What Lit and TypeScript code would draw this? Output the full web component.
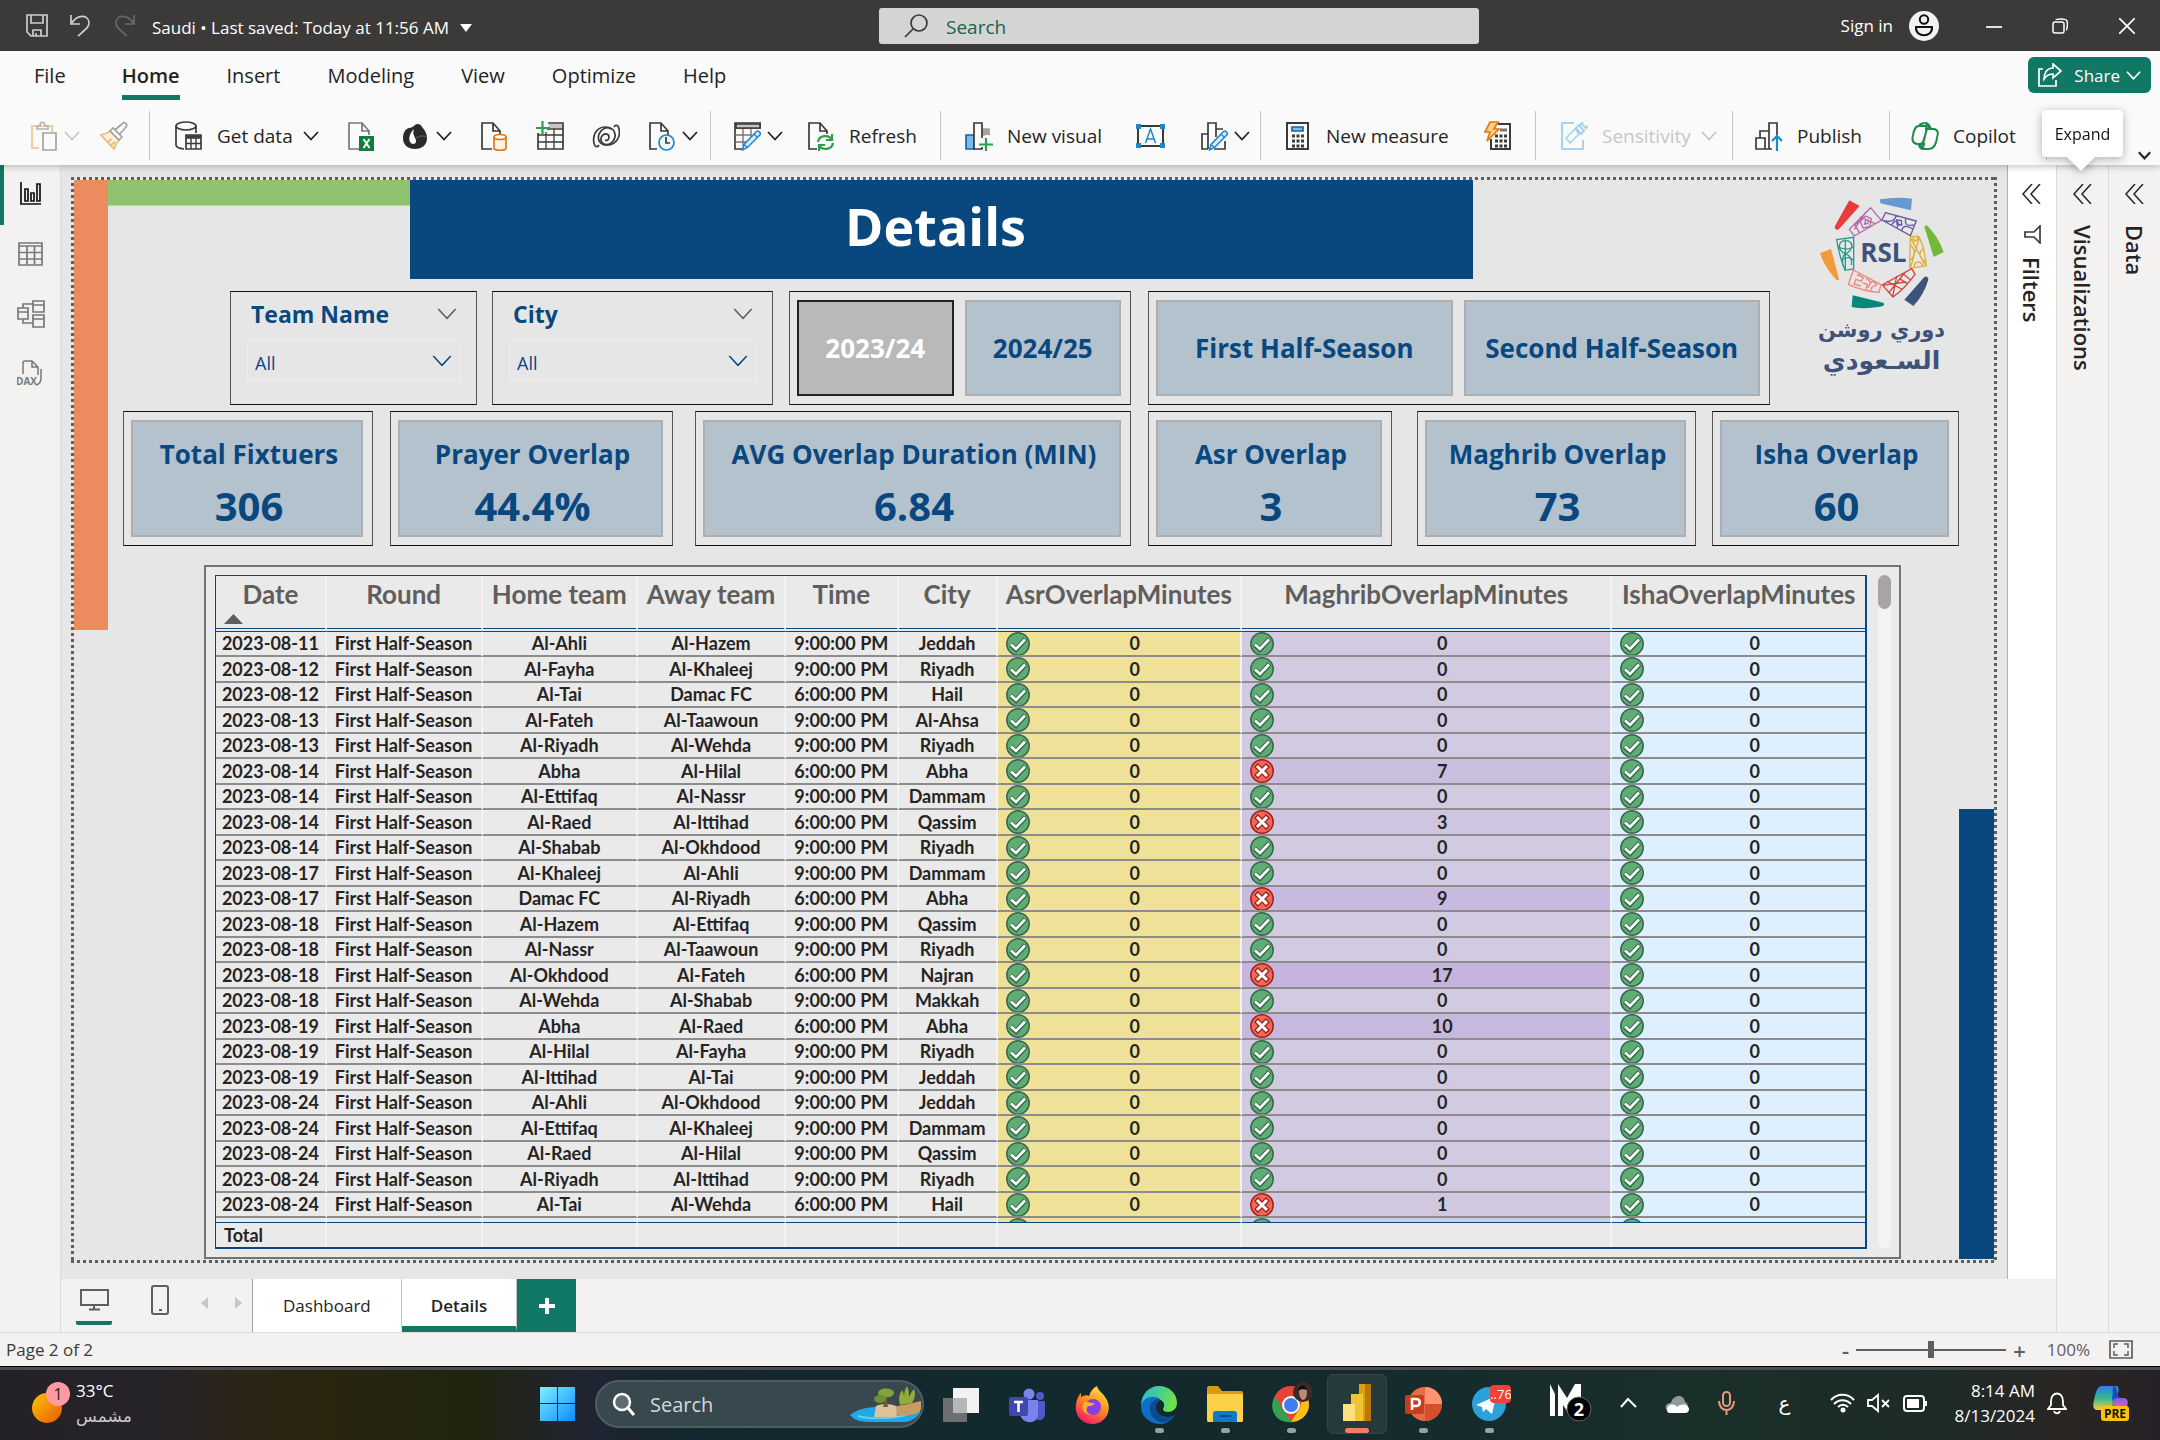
import { LitElement, html, svg, css } from 'lit';
import { customElement } from 'lit/decorators.js';
import { classMap } from 'lit/directives/class-map.js';

const base = css`
  :host { display: block; font-family: "Open Sans", "Noto Sans", sans-serif; color: #252423; }
  * { box-sizing: border-box; }
  button, select, input { font: inherit; color: inherit; }
  button { background: none; border: 0; padding: 0; margin: 0; display: flex; align-items: center; white-space: nowrap; }
  svg { display: block; flex: none; fill: none; }
`;

const chevron = (size = 16, color = '#252423', width = 1.8) => html`
  <svg width=${size} height=${size} viewBox="0 0 16 16" stroke=${color} stroke-width=${width} aria-hidden="true"><path d="M1 4l7 7.5L15 4" /></svg>`;

const icon = (body: unknown, w = 28, h = 30, vb = `0 0 ${w} ${h}`) => html`
  <svg width=${w} height=${h} viewBox=${vb} stroke="#3b3a39" stroke-width="1.7" aria-hidden="true">${body}</svg>`;

const pencil = svg`<path d="M24 9l4 4-13 14-6 3 2-7z" fill="#fafafa" stroke="none"/><path d="M23.500 10.500c1.500-1.500 5 1.500 3.500 3.300L14.500 26.500l-5 2.500 1.500-5.500z" fill="#d7ecfb" stroke="#1e87d0" stroke-width="1.500"/><path d="M21 13l3.500 3.500M11 23.500l3.500 3" stroke="#1e87d0" stroke-width="1.300"/>`;
const docPath = svg`<path d="M12 28H2V2h11l7 8v4M13 2v8h7" />`;

const ICONS = {
  paste: svg`<path d="M9 27H2V5h20v6" stroke="#f3cf9f" stroke-width="2.200"/><path d="M7 8V5h3c0-5 5-5 5 0h3v3z" stroke="#b5b3b1"/><path d="M13 12h13v17H13z" stroke="#a5a3a1" fill="#fafafa"/>`,
  brush: svg`<path d="M1 14c4-1 7-2 9-4l9 9c-2 2-4 5-5 9z" fill="#fdf0dc" stroke="#f0b878"/><path d="M7 21l5-3M10 25l5-4" stroke="#f0b878"/><path d="M10 10l3-3 9 9-3 3zM15 9l8-7c2-1 5 1 3 4l-7 8" stroke="#a5a3a1" fill="#fafafa"/>`,
  database: svg`<path d="M1 5v19c0 2 4 3.500 8 4M21 5v7"/><ellipse cx="11" cy="5" rx="10" ry="4"/><path d="M11 14h15v14H11z" fill="#fafafa"/><path d="M11 17h15M11 22.500h15M16 17v11M21 17v11" stroke-width="1.400"/><path d="M11 15.500h15" stroke-width="2.500"/>`,
  excel: svg`<path d="M12 28H2V2h13l7 8v4M15 2v8h7" stroke="#797775"/><path d="M12 15h15v15H12z" fill="#107c41" stroke="none"/><path d="M16.500 18l6 9M22.500 18l-6 9" stroke="#fff" stroke-width="2"/>`,
  lake: svg`<path d="M13 4c2-2 6-1 7 2 3 3 5 7 5 11 0 7-5 11-12 11S1 24 1 17c0-5 2-9 6-10 2 0 4-1 6-3z" fill="#2b2a29" stroke="none"/><path d="M12 8c-5 4-7 14-1 15 3 0 4-3 2-6-2-4-2-6-1-9z" fill="#fff" stroke="none"/><path d="M14 17c4-3 8-2 11-1" stroke="#6b6967" stroke-width="1"/>`,
  docCylinder: svg`<path d="M12 28H2V2h11l7 8v3M13 2v8h7"/><path d="M14 16v11c0 3 12 3 12 0V16" fill="#fdf3e6" stroke="#d97b16"/><ellipse cx="20" cy="16" rx="6" ry="2.500" fill="#fff" stroke="#d97b16"/>`,
  tablePlus: svg`<path d="M2 12v16h25V2H12"/><path d="M13 3h13v4H13z" fill="#c8c6c4" stroke="none"/><path d="M11 8h16M2 14h25M2 21h25M10 11v17M18 8v20" stroke-width="1.300"/><path d="M6.500 0v14M0 7h14" stroke="#2ba04a" stroke-width="2.200"/>`,
  spiral: svg`<path d="M3 25C-1 16 4 6 13 6c7 0 11 4 10 10-1 5-6 9-11 7-4-2-4-7-1-9 2-2 6-1 6 2s-2 4-4 3"/><path d="M26 5c4 9-1 19-11 19-7 0-10-5-8-11 2-5 8-8 12-5"/><path d="M3 25c1 1 3 1 4-1M26 5c-1-1-3-1-4 1"/>`,
  docClock: svg`<path d="M9 28H2V2h11l7 8v4M13 2v8h7"/><circle cx="18.500" cy="21.500" r="7.500" fill="#eef7fd" stroke="#1e87d0"/><path d="M18 16v6h4"/>`,
  tableEdit: svg`<path d="M10 28H2V2h26v5H2"/><path d="M3 3h24v4H3z" fill="#c8c6c4"/><path d="M2 14h17M2 21h11M10 8v17M18 8v8" stroke="#797775" stroke-width="1.400"/>${pencil}`,
  refresh: svg`${docPath}<path d="M10 13h17v17H10z" fill="#fafafa" stroke="none"/><g stroke="#2f9e4c" stroke-width="2.200"><path d="M11 21c1-7 11-8 14-2M25 13v6h-6M26 22c-1 7-11 8-14 2M12 30v-6h6"/></g>`,
  visual: svg`<path d="M1 14h8v14H1z" fill="#7db8e8" stroke="#1066b0"/><path d="M18 8h6v6h-6z" fill="#a5a3a1" stroke="#a5a3a1"/><path d="M9 2h8v26H9z" fill="#fafafa"/><path d="M15 17h5v-3h4v12h-9z" fill="#fafafa" stroke="none"/><path d="M21 17v13M14 23.500h14" stroke="#2ba04a" stroke-width="2.200"/>`,
  textBox: svg`<path d="M3 5h25v20H3z" stroke-width="2"/><g fill="#1e87d0" stroke="none"><path d="M1 3h5v5H1zM25 3h5v5h-5zM1 22h5v5H1zM25 22h5v5h-5z"/></g><path d="M10.500 22l5-14 5 14M12 18h7" stroke="#1e87d0" stroke-width="1.500"/>`,
  chartEdit: svg`<path d="M8 28H2V13h6M8 28V2h8v14M16 8h7M14 28h11v-8"/>${pencil}`,
  calc: svg`<path d="M3 2h21v26H3z" stroke-width="2"/><path d="M8 6h11v4H8z" fill="#7db8e8" stroke="#1066b0"/><path d="M8 15h12M8 20h12M8 25h12" stroke-width="3" stroke-dasharray="3 1.500"/>`,
  calcBolt: svg`<path d="M14 3h12v25H7V18" stroke-width="2"/><path d="M16 9h7" stroke="#797775" stroke-width="3"/><path d="M11 15h13M11 20h13M11 25h13" stroke-width="3" stroke-dasharray="3 1.500"/><path d="M6 1h8l-4 7h5L3 20l3-9H1z" fill="#fcd08a" stroke="#e07b10"/>`,
  sensitivity: svg`<g stroke="#a9d3ec"><path d="M14 2H2v26h21v-9" stroke-width="2"/><path d="M6 17l9-9 4 5-9 9z"/><path d="M16 7l3-3 5 6-3 3zM20 4l3-3M25 8l3-3M21 2l5 5" stroke-width="2"/></g>`,
  publish: svg`<path d="M1 17h9v11H1zM10 28h7M5 17v-7h9v18M14 10V2h8v12"/><path d="M22 30V15M17 20l5-5 5 5" stroke="#1e87d0" stroke-width="2.200"/>`,
  copilot: svg`<g stroke="#1f8a4a" stroke-width="2"><path d="M8 5c1-3 8-4 10-1l2 4h3c5 1 4 5 3 9-1 7-3 11-8 11h-6c-3 0-4-3-4-5H6c-5-1-5-5-4-9 1-5 2-9 6-9z" fill="#fafafa"/><path d="M8 23c3 0 4-1 5-5l3-10h4M8 5h6c3 0 2 3 1 6l-3 12" /><path d="M16 3l3 5h-4zM8 23h5l-1 4z" fill="#8fd3a8"/></g>`,
};

@customElement('title-bar')
class TitleBar extends LitElement {
  static styles = [base, css`
    .bar { display: grid; grid-template-columns: minmax(0, 879fr) minmax(0, 600fr) minmax(0, 681fr); height: 51px; align-items: center; background: #3b3a39; color: #fff; font-size: 17px; }
    .left { display: flex; align-items: center; padding-left: 26px; gap: 22px; }
    .file { gap: 11px; margin-left: -6px; padding-top: 4px; }
    .search { height: 36px; background: #d4d4d2; border-radius: 3px; display: flex; align-items: center; gap: 18px; padding-left: 25px; }
    .search input { border: 0; background: none; outline: 0; padding: 2px 0 0; font-size: 19px; flex: 1; min-width: 0; }
    .search input::placeholder { color: #22604f; opacity: 1; }
    .right { display: flex; align-items: center; justify-content: flex-end; gap: 50px; padding-right: 25px; }
    .sign { gap: 16px; }
    .sign svg { margin-right: -3px; }
  `];
  render() {
    return html`<header class="bar">
      <div class="left">
        <button aria-label="Save">${icon(svg`<g stroke="#d0cecc"><path d="M1 1h20v21H5l-4-4z"/><path d="M5 1v8h12V1M7 22v-6h8v6M10 22v-3"/></g>`, 22, 23)}</button>
        <button aria-label="Undo">${icon(svg`<path d="M1 1v9h9M1 10C8-1 19 1 19 9c0 4-3 6-11 13" stroke="#d0cecc"/>`, 22, 23)}</button>
        <button aria-label="Redo">${icon(svg`<path d="M20 1v9h-9M20 10C13-1 2 1 2 9c0 4 3 6 11 13" stroke="#6b6967"/>`, 22, 23)}</button>
        <button class="file">Saudi • Last saved: Today at 11:56 AM <svg width="12" height="8" viewBox="0 0 12 8"><path d="M0 0h12L6 8z" fill="#fff"/></svg></button>
      </div>
      <label class="search">${icon(svg`<circle cx="15" cy="9" r="8"/><path d="M9 15l-8 8"/>`, 24, 24)}<input type="search" placeholder="Search" aria-label="Search" /></label>
      <div class="right">
        <button class="sign">Sign in ${icon(svg`<circle cx="15" cy="15" r="15" fill="#f3f2f1" stroke="none"/><g stroke="#111" stroke-width="2"><circle cx="15" cy="8.500" r="4.200"/><path d="M7 16h16c1 11-17 11-16 0z"/></g>`, 30, 30)}</button>
        <button aria-label="Minimize">${icon(svg`<path d="M0 9h16" stroke="#fff"/>`, 16, 16)}</button>
        <button aria-label="Restore">${icon(svg`<g stroke="#fff" stroke-width="1.500"><rect x="1" y="4" width="11" height="11" rx="2"/><path d="M4 2c0-1 10-2 11 1s0 9-1 9"/></g>`, 17, 16)}</button>
        <button aria-label="Close">${icon(svg`<path d="M0 0l16 16M16 0L0 16" stroke="#fff"/>`, 16, 16)}</button>
      </div>
    </header>`;
  }
}

type Tool = { i: unknown; t?: string; c?: boolean; off?: boolean; w?: number; n: string };
const GROUPS: { w: number; l: number; r: number; tools: Tool[] }[] = [
  { w: 150, l: 30, r: 21, tools: [{ i: ICONS.paste, c: true, off: true, n: 'Paste' }, { i: ICONS.brush, off: true, n: 'Format painter' }] },
  { w: 561, l: 25, r: 12, tools: [{ i: ICONS.database, t: 'Get data', c: true, n: '' }, { i: ICONS.excel, n: 'Excel workbook' }, { i: ICONS.lake, c: true, n: 'OneLake' }, { i: ICONS.docCylinder, n: 'SQL Server' }, { i: ICONS.tablePlus, n: 'Enter data' }, { i: ICONS.spiral, n: 'Dataverse' }, { i: ICONS.docClock, c: true, n: 'Recent sources' }] },
  { w: 230, l: 22, r: 23, tools: [{ i: ICONS.tableEdit, c: true, n: 'Transform data' }, { i: ICONS.refresh, t: 'Refresh', n: '' }] },
  { w: 320, l: 24, r: 10, tools: [{ i: ICONS.visual, t: 'New visual', n: '' }, { i: ICONS.textBox, w: 31, n: 'Text box' }, { i: ICONS.chartEdit, c: true, n: 'More visuals' }] },
  { w: 275, l: 23, r: 23, tools: [{ i: ICONS.calc, t: 'New measure', n: '' }, { i: ICONS.calcBolt, n: 'Quick measure' }] },
  { w: 197, l: 24, r: 11, tools: [{ i: ICONS.sensitivity, t: 'Sensitivity', c: true, off: true, n: '' }] },
  { w: 157, l: 22, r: 22, tools: [{ i: ICONS.publish, t: 'Publish', n: '' }] },
  { w: 157, l: 21, r: 22, tools: [{ i: ICONS.copilot, t: 'Copilot', n: '' }] },
];

@customElement('ribbon-bar')
class RibbonBar extends LitElement {
  static styles = [base, css`
    :host { position: relative; z-index: 1; }
    .ribbon { background: #fafafa; box-shadow: 0 2px 6px rgba(0,0,0,.22); height: 114px; display: flex; flex-direction: column; }
    .top { display: flex; align-items: center; height: 50px; justify-content: space-between; padding-right: 9px; }
    nav { display: flex; font-size: 20px; gap: 47px; padding-left: 34px; }
    nav a { color: inherit; text-decoration: none; padding: 10px 0 6px; line-height: 26px; border-bottom: 5px solid transparent; }
    nav a.file { margin-right: 9px; }
    nav a.on { border-color: #117865; font-weight: 600; }
    .share { background: #117865; color: #fff; border-radius: 6px; height: 36px; padding: 0 10px; gap: 8px; font-size: 17px; margin-bottom: 2px; }
    .share .t { display: flex; align-items: center; gap: 6px; margin-left: 4px; }
    .tools { display: flex; flex: 1; font-size: 19px; padding-top: 10px; align-items: flex-start; }
    .group { display: flex; justify-content: space-between; align-items: center; height: 49px; border-right: 1px solid #c8c6c4; min-width: 0; }
    .tool { gap: 6px; }
    .tool.wide { gap: 10px; }
    .tool.wide .txt { margin-left: 4px; padding-top: 1px; }
    .tool:disabled { color: #c8c6c4; }
    .more { margin-left: auto; margin-right: 9px; align-self: flex-end; padding-bottom: 3px; }
  `];
  render() {
    return html`<div class="ribbon">
      <div class="top">
        <nav>${['File', 'Home', 'Insert', 'Modeling', 'View', 'Optimize', 'Help'].map(t => html`<a href="#${t.toLowerCase()}" class=${classMap({ file: t === 'File', on: t === 'Home' })}>${t}</a>`)}</nav>
        <button class="share">${icon(svg`<g stroke="#fff"><path d="M5 6H1v17h17v-6"/><path d="M15 1l8 7-8 7v-4c-5 0-7 2-9 5 0-6 3-11 9-11z"/></g>`, 24, 24)}<span class="t">Share ${chevron(15, '#fff')}</span></button>
      </div>
      <div class="tools">
        ${GROUPS.map(g => html`<div class="group" style="flex: 0 1 ${g.w / 21.6}%; padding: 0 ${g.r}px 0 ${g.l}px">
          ${g.tools.map(t => html`<button class=${classMap({ tool: true, wide: !!t.t })} ?disabled=${t.off} aria-label=${t.t ?? t.n}>${icon(t.i, t.w ?? 28)}${t.t ? html`<span class="txt">${t.t}</span>` : ''}${t.c ? chevron(16, t.off ? '#c8c6c4' : '#252423') : ''}</button>`)}
        </div>`)}
        <button class="more" aria-label="Collapse ribbon">${chevron(13, '#252423', 2.6)}</button>
      </div>
    </div>`;
  }
}

const ROWS = `11|Al-Ahli|Al-Hazem|9|Jeddah|0
12|Al-Fayha|Al-Khaleej|9|Riyadh|0
12|Al-Tai|Damac FC|6|Hail|0
13|Al-Fateh|Al-Taawoun|9|Al-Ahsa|0
13|Al-Riyadh|Al-Wehda|9|Riyadh|0
14|Abha|Al-Hilal|6|Abha|7
14|Al-Ettifaq|Al-Nassr|9|Dammam|0
14|Al-Raed|Al-Ittihad|6|Qassim|3
14|Al-Shabab|Al-Okhdood|9|Riyadh|0
17|Al-Khaleej|Al-Ahli|9|Dammam|0
17|Damac FC|Al-Riyadh|6|Abha|9
18|Al-Hazem|Al-Ettifaq|9|Qassim|0
18|Al-Nassr|Al-Taawoun|9|Riyadh|0
18|Al-Okhdood|Al-Fateh|6|Najran|17
18|Al-Wehda|Al-Shabab|9|Makkah|0
19|Abha|Al-Raed|6|Abha|10
19|Al-Hilal|Al-Fayha|9|Riyadh|0
19|Al-Ittihad|Al-Tai|9|Jeddah|0
24|Al-Ahli|Al-Okhdood|9|Jeddah|0
24|Al-Ettifaq|Al-Khaleej|9|Dammam|0
24|Al-Raed|Al-Hilal|9|Qassim|0
24|Al-Riyadh|Al-Ittihad|9|Riyadh|0
24|Al-Tai|Al-Wehda|6|Hail|1`.split('\n').map(r => r.split('|'));

const COLUMNS: [string, number][] = [['Date', 111], ['Round', 156], ['Home team', 156], ['Away team', 148], ['Time', 113], ['City', 99], ['AsrOverlapMinutes', 245], ['MaghribOverlapMinutes', 371], ['IshaOverlapMinutes', 253]];
const CARDS: [string, string][] = [['Total Fixtuers', '306'], ['Prayer Overlap', '44.4%'], ['AVG Overlap Duration (MIN)', '6.84'], ['Asr Overlap', '3'], ['Maghrib Overlap', '73'], ['Isha Overlap', '60']];

const good = html`<svg width="24" height="24" viewBox="0 0 24 24" role="img" aria-label="OK"><circle cx="12" cy="12" r="11.200" fill="#5fad74" stroke="#34684a" stroke-width="1.500"/><path d="M4.500 12.500l5.500 5L19.500 7" stroke="#34684a" stroke-width="5"/><path d="M5 12.500l5 4.500L19 7.500" stroke="#fff" stroke-width="2.600"/></svg>`;
const bad = html`<svg width="24" height="24" viewBox="0 0 24 24" role="img" aria-label="Overlap"><circle cx="12" cy="12" r="11.200" fill="#f0685a" stroke="#a32118" stroke-width="1.500"/><path d="M6 6l12 12M18 6L6 18" stroke="#a32118" stroke-width="5.500"/><path d="M7 7l10 10M17 7L7 17" stroke="#fff" stroke-width="3"/></svg>`;

/* Background of the Maghrib column darkens with the overlap, up to twelve minutes. */
const purple = (n: number) => {
  const t = Math.min(n / 12, 1);
  const mix = (a: number, b: number) => Math.round(a + (b - a) * t);
  return `rgb(${mix(210, 197)},${mix(202, 181)},${mix(224, 222)})`;
};

@customElement('report-page')
class ReportPage extends LitElement {
  static styles = [base, css`
    .canvas { background: #e6e6e6; padding: 12px 10px 16px; }
    .sheet { padding: 3px; background:
      repeating-linear-gradient(90deg, #5f5f5f 0 3px, transparent 3px 6px) top / 100% 3px no-repeat,
      repeating-linear-gradient(90deg, #5f5f5f 0 3px, transparent 3px 6px) bottom / 100% 3px no-repeat,
      repeating-linear-gradient(#5f5f5f 0 3px, transparent 3px 6px) left / 3px 100% no-repeat,
      repeating-linear-gradient(#5f5f5f 0 3px, transparent 3px 6px) right / 3px 100% no-repeat; }
    .page { display: grid; grid-template-columns: 34px minmax(0, 1fr) 35px; padding-bottom: 1px; }
    .orange { background: #ec8b5e; height: 450px; }
    .navy { background: #09477f; height: 450px; align-self: end; }
    .body { min-width: 0; }
    .upper { display: grid; grid-template-columns: minmax(0, 1662fr) minmax(0, 189fr); }
    .head { display: grid; grid-template-columns: 302fr 1063fr 297fr; height: 99px; }
    .green { background: #8fc36f; height: 26px; border-bottom: 1px solid #b0d59a; }
    h1 { margin: 0; background: #09477f; color: #fff; font-size: 52px; line-height: 92px; font-weight: 700; text-align: center; padding-right: 12px; height: 99px; }
    .slicers { display: grid; grid-template-columns: 122fr 247fr 15fr 281fr 16fr 342fr 17fr 622fr; margin-top: 12px; height: 114px; }
    .box { border: 1px solid #222; border-color: #111 #555; }
    .s1 { grid-column: 2; } .s2 { grid-column: 4; } .s3 { grid-column: 6; } .s4 { grid-column: 8; }
    .drop { padding: 6px 15px 0 16px; }
    .drop label { display: flex; justify-content: space-between; align-items: center; color: #09477f; font-size: 23px; font-weight: 700; line-height: 32px; padding: 0 4px; }
    .sel { display: grid; grid-template-columns: 1fr auto; align-items: center; margin-top: 10px; height: 41px; border: 1px solid #eee; }
    select { appearance: none; border: 0; background: none; color: #09477f; font-size: 18px; padding: 5px 7px 0; grid-area: 1 / 1 / 2 / 3; height: 39px; outline: 0; }
    .sel svg { grid-area: 1 / 2; margin-right: 8px; pointer-events: none; }
    .pick { display: grid; grid-template-columns: 1fr 1fr; gap: 11px; padding: 8px 9px 8px 7px; }
    .pick button { justify-content: center; background: #b4c2cd; border: 2px solid #adaeaf; color: #09477f; font-size: 26px; font-weight: 700; }
    .pick button.on { background: #b9b9b9; border-color: #222; color: #fff; }
    .cards { display: grid; grid-template-columns: 15fr 250fr 17fr 283fr 22fr 436fr 17fr 244fr 25fr 279fr 16fr 247fr; margin-top: 6px; }
    .card { grid-row: 1; padding: 8px 9px 8px 7px; height: 135px; }
    .card:nth-child(1) { grid-column: 2; } .card:nth-child(2) { grid-column: 4; } .card:nth-child(3) { grid-column: 6; }
    .card:nth-child(4) { grid-column: 8; } .card:nth-child(5) { grid-column: 10; } .card:nth-child(6) { grid-column: 12; }
    .in { background: #b4c2cd; border: 2px solid #adaeaf; height: 117px; text-align: center; color: #09477f; font-weight: 700; padding: 14px 0 0 4px; }
    .in .k { font-size: 26px; line-height: 36px; white-space: nowrap; }
    .in .v { font-size: 40px; line-height: 68px; }
    .logo { display: flex; flex-direction: column; align-items: center; padding: 17px 0 0 34px; }
    .arabic { font: 700 21px/28px "DejaVu Sans", sans-serif; color: #3e5379; text-align: center; white-space: nowrap; margin-top: 7px; }
    .arabic div + div { font-size: 25px; line-height: 34px; }
    .lower { display: grid; grid-template-columns: 96fr 1697fr 58fr; margin-top: 19px; }
    .frame { grid-column: 2; border: 2px solid #737373; background: #eaeaea; padding: 8px 8px 8px 9px; display: flex; gap: 11px; min-width: 0; }
    .wrap { flex: 1; min-width: 0; border: 1px solid #09477f; border-width: 1px 2px 2px 1px; }
    table { width: 100%; table-layout: fixed; border-collapse: separate; border-spacing: 0; font: 700 18px Lato, "Open Sans", sans-serif; }
    th, td { padding: 0; text-align: center; white-space: nowrap; overflow: hidden; border-right: 2px solid #f3f3f3; }
    th:last-child, td:last-child { border-right: 0; }
    thead th { height: 56px; vertical-align: top; font-size: 26px; line-height: 31px; color: #605e5c; border-bottom: 4px double #09477f; padding-top: 3px; }
    .sort { margin: 4px 0 0 8px; }
    tbody td { height: 25px; line-height: 23px; border-bottom: 2px solid #8c8c8c; }
    tbody tr:nth-child(even) td { height: 26px; }
    .asr { background: #f0e199; } .mag { background: #d2cadf; } .isha { background: #deefff; }
    .val { display: flex; padding-left: 8px; height: 23px; align-items: center; }
    .val span { flex: 1; }
    tbody tr.cut td { height: 4px; border-bottom: 0; }
    tr.cut .val { height: 4px; align-items: flex-start; overflow: hidden; }
    tfoot td { height: 25px; line-height: 22px; text-align: left; padding-left: 8px; border-top: 1px solid #09477f; }
    .scroll { width: 13px; background: #f3f3f3; border-radius: 7px; }
    .thumb { height: 34px; border-radius: 7px; background: #a6a5a4; }
  `];
  private drop(id: string, label: string, cls: string) {
    return html`<div class="box drop ${cls}">
      <label for=${id}>${label}${chevron(20, '#605e5c', 1.2)}</label>
      <div class="sel"><select id=${id}><option>All</option></select>${chevron(20, '#09477f', 1.2)}</div>
    </div>`;
  }
  render() {
    return html`<section class="canvas"><div class="sheet"><div class="page">
      <div class="orange"></div>
      <div class="body">
        <div class="upper">
          <div>
            <div class="head"><div class="green"></div><h1>Details</h1></div>
            <div class="slicers">
              ${this.drop('team', 'Team Name', 's1')}
              ${this.drop('city', 'City', 's2')}
              <div class="box pick s3"><button class="on" aria-pressed="true">2023/24</button><button>2024/25</button></div>
              <div class="box pick s4"><button>First Half-Season</button><button>Second Half-Season</button></div>
            </div>
          </div>
          <div class="logo">
            <svg width="126" height="112" viewBox="59 50 378 336" role="img" aria-label="RSL">
              <path d="M150 60l31 17-61 68c-5 6-16 4-13-8z" fill="#e93a3c"/>
              <path d="M242 57c32-5 65-6 96-2l-3 35-92-21z" fill="#6699cf"/>
              <path d="M375 139c2-4 7-5 10-2 21 22 37 47 48 78l-30 15z" fill="#72b93a"/>
              <path d="M375 290c4-3 12-2 12 8-9 30-24 57-45 79l-27-19z" fill="#3e5379"/>
              <path d="M160 345l92 22c4 3 2 9-3 11-30 6-62 8-92 2z" fill="#03887a"/>
              <path d="M62 219l33-13 24 90c0 5-5 6-8 2-22-24-38-48-49-79z" fill="#f4993a"/>
              <g stroke-width="4">
                <g stroke="#b66aac"><path d="M214 82l32 38-81 47-15-20zM182 110l45 20M198 96l-33 51M180 157l-14-24 17-13M198 107l18 8-5 24-20 4-8-20zM199 117l8 3-2 9-9 2z"/></g>
                <g stroke="#6c58a5"><path d="M258 97l93 25-18 44-85-47zM290 106c-2 14-14 20-36 15M277 134c6-12 14-16 20-6l-4 15M320 114c-6 18 3 24 27 20M308 152c0-14 12-20 32-6M292 119l14 2 1 13-14-2z"/></g>
                <g stroke="#e2ae35"><path d="M333 169l25-1c15 27 20 58 23 88l-50 8zM335 175l42 78M360 172l-26 88M334 195c14 10 14 34 0 44M375 205c-18 5-18 30 4 38M345 260c0-18 18-20 25-4M340 170c4 16 12 16 16 0"/></g>
                <g stroke="#cf4a3e"><path d="M337 265l10 17c-19 27-40 49-66 68l-32-36zM263 303l44 23M250 315l70-10M292 287l-12 62M318 275l-48 60M300 295l24 14M313 282l22 18"/></g>
                <g stroke="#f0867b"><path d="M162 269l83 44-6 23c-32-2-62-10-92-24zM172 283l20 8-6 12-16-6-6 14 20 6M200 294l16 12 6-4 10 12-14 6-4 12M190 308l14 4-4 16M178 276l4 10M214 306l-8 16"/></g>
                <g stroke="#2b9a8b"><path d="M112 178l51-7v95l-26 4c-12-30-20-60-25-92zM138 174v96M118 200c14 8 30 8 45 0M126 240c12-10 26-10 37 0M122 190c6-12 28-12 34 0s-8 28-18 30c-12-4-22-16-16-30zM130 255c-2-20 2-30 8-35 12 4 22 16 18 34"/></g>
              </g>
              <text x="252" y="245" text-anchor="middle" font-family="Open Sans" font-weight="700" font-size="78" fill="#3e5379">RSL</text>
            </svg>
            <div class="arabic" lang="ar" dir="rtl"><div>دوري روشن</div><div>السـعودي</div></div>
          </div>
        </div>
        <div class="cards">${CARDS.map(([k, v]) => html`<div class="box card"><div class="in"><div class="k">${k}</div><div class="v">${v}</div></div></div>`)}</div>
        <div class="lower"><div class="frame">
          <div class="wrap"><table>
            <colgroup>${COLUMNS.map(([, w]) => html`<col style="width:${w / 16.52}%" />`)}</colgroup>
            <thead><tr>${COLUMNS.map(([t]) => html`<th scope="col">${t}${t === 'Date' ? html`<svg class="sort" width="19" height="10" viewBox="0 0 19 10"><path d="M9.500 0L19 10H0z" fill="#605e5c"/></svg>` : ''}</th>`)}</tr></thead>
            <tbody>
              ${ROWS.map(([d, h, a, t, c, m]) => html`<tr>
                <td>2023-08-${d}</td><td>First Half-Season</td><td>${h}</td><td>${a}</td><td>${t}:00:00 PM</td><td>${c}</td>
                <td class="asr"><div class="val">${good}<span>0</span></div></td>
                <td style="background:${purple(+m)}"><div class="val">${+m ? bad : good}<span>${m}</span></div></td>
                <td class="isha"><div class="val">${good}<span>0</span></div></td></tr>`)}
              <tr class="cut"><td></td><td></td><td></td><td></td><td></td><td></td>
                ${['asr', 'mag', 'isha'].map(c => html`<td class=${c}><div class="val">${good}</div></td>`)}</tr>
            </tbody>
            <tfoot><tr><td>Total</td>${COLUMNS.slice(1).map(() => html`<td></td>`)}</tr></tfoot>
          </table></div>
          <div class="scroll"><div class="thumb"></div></div>
        </div></div>
      </div>
      <div class="navy"></div>
    </div></div></section>`;
  }
}

@customElement('task-bar')
class TaskBar extends LitElement {
  static styles = [base, css`
    .bar { display: grid; grid-template-columns: minmax(0, 525fr) auto minmax(0, 638fr); height: 73px; border-top: 3px solid #4b4d4f; color: #fff; font-size: 17px;
      background: linear-gradient(90deg, #242126 0, #26222a 7%, #2b2517 11%, #29250f 15%, #20240f 22%, #212432 27%, #14262f 31%, #12292d 45%, #142a2d 62%, #1a2f2a 78%, #1d2b27 90%, #2a2523 96%, #262126 100%); }
    .weather { gap: 6px; padding: 0 0 4px 32px; line-height: 25px; text-align: left; }
    .weather .ar { font-family: "DejaVu Sans", sans-serif; font-size: 17px; color: #c8c8c8; }
    .apps { display: flex; align-items: center; padding-bottom: 2px; }
    .app { width: 66px; height: 68px; display: flex; justify-content: center; position: relative; }
    .app.run::after { content: ""; position: absolute; bottom: 5px; left: 29px; width: 9px; height: 5px; border-radius: 3px; background: #9aa1a3; }
    .app.active { width: 60px; height: 60px; margin: 0 3px; background: #263a3d; border-radius: 6px; border: 1px solid #33464a; }
    .app.active::after { left: 17px; width: 24px; bottom: 0; background: #f37e63; }
    .pill { width: 329px; height: 48px; margin: 0 4px; border-radius: 24px; background: #37484e; border: 2px solid #4f5e63; display: flex; align-items: center; gap: 14px; padding-left: 15px; }
    .pill input { background: none; border: 0; outline: 0; padding: 0; flex: 1; min-width: 0; font-size: 20px; }
    .pill input::placeholder { color: #d4d8da; opacity: 1; }
    .tray { display: flex; align-items: center; justify-content: flex-end; padding: 0 31px 4px 0; }
    .set { display: flex; align-items: center; }
    .a { gap: 28px; margin-right: 44px; }
    .b { gap: 12px; margin-right: 26px; }
    .c { gap: 26px; }
    .clock { text-align: right; line-height: 25px; display: block; margin: 0 12px 0 0; }
    .ink { font-size: 20px; font-family: "DejaVu Sans", sans-serif; margin-right: 40px; }
  `];
  private app(name: string, body: unknown, state = '') {
    return html`<button class="app ${state}" aria-label=${name}><svg width="44" height="44" viewBox="0 0 44 44">${body}</svg></button>`;
  }
  render() {
    return html`<footer class="bar">
      <button class="weather">
        <svg width="38" height="42" viewBox="0 0 38 42"><defs><linearGradient id="sun" x2="1" y2="1"><stop stop-color="#ffc400"/><stop offset="1" stop-color="#e65a00"/></linearGradient></defs><circle cx="15" cy="26" r="15" fill="url(#sun)"/><circle cx="26" cy="12" r="12" fill="#ff9aa2"/><text x="26" y="18" text-anchor="middle" font-size="16" font-family="Open Sans" fill="#222">1</text></svg>
        <span>33°C<br /><span class="ar" lang="ar">مشمس</span></span>
      </button>
      <div class="apps">
        ${this.app('Start', svg`<defs><linearGradient id="win" x2="1" y2="1"><stop stop-color="#7fefff"/><stop offset="1" stop-color="#0a8cff"/></linearGradient></defs><path d="M4 5h17v16H4zM22 5h17v16H22zM4 22h17v17H4zM22 22h17v17H22z" fill="url(#win)"/>`)}
        <label class="pill">${icon(svg`<circle cx="10" cy="10" r="8" stroke="#fff" stroke-width="2.500" fill="#5d6c72"/><path d="M16 16l6 7" stroke="#fff" stroke-width="3"/>`, 24, 25)}<input type="search" placeholder="Search" aria-label="Search the taskbar" />
          <svg width="72" height="38" viewBox="0 0 72 38"><path d="M0 30c10-8 25-9 40-8h30v6c-4 5-8 8-14 9H20C10 37 4 35 0 30z" fill="#1fa8e8"/><path d="M8 31c8 3 34 3 48-1" stroke="#5cd0f5" stroke-width="2"/><path d="M40 22c10-1 22-4 31-6v8c-2 6-12 7-22 6z" fill="#c99c62"/><path d="M26 21c7-3 15-2 20 0l1 11H24z" fill="#dcc39b"/><path d="M33 22l3-12 2 12z" fill="#7a5a34"/><ellipse cx="36" cy="8" rx="8" ry="4.500" fill="#86a23d"/><ellipse cx="30" cy="14" rx="6" ry="4" fill="#6f8f35"/><path d="M50 20c-2-8 0-12 2-15 2 3 2 5 2 8 0-5 1-9 3-12 2 4 2 8 2 11 1-3 3-6 5-8 2 5 1 9-2 14z" fill="#93ab3a"/></svg>
        </label>
        ${this.app('Task view', svg`<path d="M4 16h24v24H4z" fill="#6b6f72"/><path d="M14 6h26v25H14z" fill="#f2f2f2"/><path d="M14 16h14v15H14z" fill="#b4b6b7"/>`)}
        ${this.app('Teams', svg`<circle cx="24" cy="12" r="5.500" fill="#7b83eb"/><circle cx="35" cy="14" r="4" fill="#5059c9"/><path d="M28 19h12v13c0 6-7 8-10 4z" fill="#5059c9"/><path d="M15 18h18v14c0 11-16 11-18 0z" fill="#7b83eb"/><rect x="4" y="15" width="19" height="19" rx="2" fill="#4048b0"/><path d="M9 20h9M13.500 20v10" stroke="#fff" stroke-width="2.500"/>`)}
        ${this.app('Firefox', svg`<defs><linearGradient id="fox" x1=".8" y1="0" x2=".3" y2="1"><stop stop-color="#ffe84a"/><stop offset=".5" stop-color="#ff8a1c"/><stop offset="1" stop-color="#f5186f"/></linearGradient></defs><path d="M26 4c1 5 6 7 8 11 8 10 3 26-12 27C8 42 2 30 6 18c1-3 2-5 4-7v4c4-2 6-2 8-1 1-4 4-8 8-10z" fill="url(#fox)"/><circle cx="22" cy="25" r="8" fill="#8a3fe0"/><path d="M13 20c5-1 7 2 11 1-2 3-5 3-7 3-3 4-1 8 4 9-8 0-12-7-8-13z" fill="#ffb02a"/>`)}
        ${this.app('Edge', svg`<defs><linearGradient id="edg" x2="1" y2=".3"><stop stop-color="#23b6e0"/><stop offset="1" stop-color="#6be24a"/></linearGradient></defs><path d="M4 24C4 12 12 4 22 4c11 0 18 8 18 17 0 6-5 9-9 9-5 0-6-3-4-5 2-9-12-12-23-1z" fill="url(#edg)"/><path d="M4 23c2-7 12-11 19-6-8 0-8 18 8 18 4 0 6-1 7-2-5 9-18 13-28 4-5-4-6-9-6-14z" fill="#0f6fc5"/><path d="M13 24c2-6 7-8 11-6-7 2-8 17 7 17 4 0 6-1 7-2-10 15-27 5-25-9z" fill="#0a4c94"/>`, 'run')}
        ${this.app('File Explorer', svg`<path d="M4 6c0-1 1-2 2-2h9l4 5h19c2 0 2 1 2 2v8H4z" fill="#d99a10"/><path d="M4 12h36v26c0 2-1 2-2 2H6c-1 0-2 0-2-2z" fill="#fdd04a"/><path d="M10 40v-9c0-1 1-2 3-2h18c2 0 3 1 3 2v9z" fill="#0f78c8"/><path d="M16 34h12" stroke="#0a4f8a" stroke-width="2"/>`, 'run')}
        ${this.app('Chrome', svg`<circle cx="22" cy="22" r="18" fill="#e94335"/><path d="M6 14l9 15 8 11C8 42-2 28 6 14z" fill="#34a050"/><path d="M22 40l9-14 2-9h6c4 12-5 23-17 23z" fill="#fbc116"/><circle cx="22" cy="23" r="9" fill="#fff"/><circle cx="22" cy="23" r="7" fill="#3d7ff0"/><circle cx="34" cy="10" r="10" fill="#3a2a2c"/><path d="M30 9c1-6 8-5 8 1 0 5-2 8-4 8s-4-4-4-9z" fill="#c08a70"/><path d="M29 9c0-7 9-7 9-1-4-1-6-1-9 1z" fill="#151012"/>`, 'run')}
        ${this.app('Power BI', svg`<path d="M24 2h12v37H24z" fill="#e0a00c"/><path d="M30 2h6v37h-6z" fill="#b87808"/><path d="M16 12h12v27H16z" fill="#f0c330"/><path d="M8 22h12v17H8z" fill="#fbe27c"/>`, 'run active')}
        ${this.app('PowerPoint', svg`<circle cx="24" cy="22" r="17" fill="#ea6a47"/><path d="M24 5c10 0 17 8 17 17H24z" fill="#ff9470"/><path d="M24 39c10 0 17-8 17-17H24z" fill="#d4502c"/><rect x="4" y="13" width="19" height="19" rx="2" fill="#c43e1c"/><path d="M11 28V17h4c5 0 5 7 0 7h-4" stroke="#fff" stroke-width="2.500"/>`, 'run')}
        ${this.app('Telegram', svg`<circle cx="22" cy="22" r="17" fill="#2ba0da"/><path d="M9 23l20-9-4 18-6-5-3 3-1-5z" fill="#fff"/><rect x="23" y="3" width="21" height="18" rx="4" fill="#ef4136"/><text x="34" y="17" text-anchor="middle" font-family="Open Sans" font-size="13" fill="#fff">..76</text>`, 'run')}
      </div>
      <div class="tray">
        <div class="set a">
          <button aria-label="Notifications from M">${icon(svg`<path d="M0 1l5 10v22H0zM8 1l9 14 8-14 6 0v32h-5V14l-9 14-4-6v11H8z" fill="#fff" stroke="none"/><circle cx="29" cy="26" r="12" fill="#000" stroke="#666" stroke-width="1"/><text x="29" y="33" text-anchor="middle" font-family="Open Sans" font-weight="700" font-size="18" fill="#fff" stroke="none">2</text>`, 42, 40)}</button>
          <button aria-label="Show hidden icons">${icon(svg`<path d="M1 11l7-8 8 8" stroke="#fff" stroke-width="2"/>`, 17, 14)}</button>
          <button aria-label="OneDrive">${icon(svg`<path d="M6 10C8 1 19 1 20 9c4 1 4 9-1 9H5c-6 0-6-8 1-8z" fill="#8f9a9a" stroke="none"/><path d="M2 17c0-6 8-7 10-3 5-5 12-2 12 2 0 4-3 4-5 4H5c-2 0-3-1-3-3z" fill="#fff" stroke="none"/>`, 25, 20)}</button>
          <button aria-label="Microphone">${icon(svg`<g stroke="#e69a7c" stroke-width="2"><rect x="5" y="1" width="7" height="14" rx="3.500"/><path d="M1 10c0 12 15 12 15 0M8.500 19v5"/></g>`, 17, 25)}</button>
        </div>
        <button class="ink" aria-label="Arabic keyboard">ع</button>
        <div class="set b">
          <button aria-label="Wi-Fi">${icon(svg`<g stroke="#fff" stroke-width="2"><path d="M1 7c6-7 17-7 23 0M4 11c5-5 12-5 17 0M8 14c3-3 7-3 10 0"/><circle cx="13" cy="17" r="1.500" fill="#fff"/></g>`, 25, 20)}</button>
          <button aria-label="Muted">${icon(svg`<g stroke="#fff" stroke-width="1.800"><path d="M1 7h4l6-5v16l-6-5H1zM15 7l7 7M22 7l-7 7"/></g>`, 24, 20)}</button>
          <button aria-label="Battery">${icon(svg`<rect x="1" y="2" width="20" height="15" rx="3" stroke="#fff" stroke-width="2"/><path d="M4 5h12v9H4z" fill="#fff" stroke="none"/><path d="M23 7v5" stroke="#fff" stroke-width="2"/>`, 25, 19)}</button>
        </div>
        <button class="clock">8:14 AM<br />8/13/2024</button>
        <div class="set c">
          <button aria-label="Notifications">${icon(svg`<path d="M1 17l3-4V9c0-10 12-10 12 0v4l3 4zM7 19c1 3 5 3 6 0" stroke="#fff" stroke-width="1.800"/>`, 20, 23)}</button>
          <button aria-label="Copilot preview"><svg width="36" height="36" viewBox="0 0 36 36"><defs><linearGradient id="cpa" x2="0" y2="1"><stop stop-color="#2b7fe8"/><stop offset=".5" stop-color="#35b890"/><stop offset="1" stop-color="#f2d13a"/></linearGradient><linearGradient id="cpb" x2="0" y2="1"><stop stop-color="#7a5cf0"/><stop offset=".5" stop-color="#e05ac0"/><stop offset="1" stop-color="#ff9a4a"/></linearGradient></defs><path d="M8 1h15c3 0 3 4 2 7l-4 8-3 9H5c-6 0-5-6-4-10C3 7 4 2 8 1z" fill="url(#cpa)"/><path d="M20 1c5 0 4 12 8 12-6 0-8 0-9 6z" fill="#1848c8"/><path d="M24 13h6c6 0 5 5 4 9-2 6-4 8-8 8H15c3 0 4-5 5-10 1-4 2-7 4-7z" fill="url(#cpb)"/><rect x="8" y="21" width="28" height="15" rx="3" fill="#ffc20e"/><text x="22" y="33" text-anchor="middle" font-family="Open Sans" font-weight="700" font-size="12" fill="#111">PRE</text></svg></button>
        </div>
      </div>
    </footer>`;
  }
}

@customElement('app-root')
class AppRoot extends LitElement {
  static styles = [base, css`
    .main { display: flex; }
    .rail { width: 61px; flex: none; background: #f3f2f1; border-right: 1px solid #dddbd9; display: flex; flex-direction: column; }
    .rail button { height: 60px; padding: 0 0 2px 13px; border-left: 4px solid transparent; }
    .rail button.on { border-color: #117865; }
    .work { flex: 1; min-width: 0; display: flex; flex-direction: column; }
    .stage { display: flex; flex: 1; }
    report-page { flex: 1; min-width: 0; background: #e6e6e6; }
    .pane { flex: none; width: 52px; background: #f3f2f1; border-left: 1px solid #dddbd9; display: flex; flex-direction: column; align-items: center; gap: 21px; padding-top: 19px; position: relative; }
    .pane.filters { width: 49px; background: #fff; border-color: #b3b0ad; }
    .pane h2 { margin: 0; writing-mode: vertical-rl; font-size: 22px; line-height: 30px; font-weight: 600; display: flex; align-items: center; gap: 13px; }
    .tip { position: absolute; top: -55px; left: -15px; width: 81px; height: 47px; line-height: 49px; background: #fff; border-radius: 4px; text-align: center; font-size: 16px; color: #111; z-index: 3; filter: drop-shadow(0 2px 5px rgba(0,0,0,.3)); }
    .tip::after { content: ""; position: absolute; left: 24px; top: 46px; border: 15px solid transparent; border-top-color: #fff; border-bottom: 0; }
    .tabs { display: flex; height: 53px; background: #f3f2f1; font-size: 17px; }
    .views { display: flex; width: 192px; border-right: 1px solid #a19f9d; padding-left: 15px; align-items: stretch; }
    .views button { justify-content: center; border-bottom: 4px solid transparent; margin-bottom: 7px; }
    .views .desk { width: 36px; border-color: #117865; border-radius: 2px; }
    .views .phone { width: 18px; margin: 0 32px 7px 39px; }
    .views .step { margin-right: 27px; }
    .views .step, .views .next { padding-top: 5px; }
    .tab { background: #fff; padding: 6px 30px 0; justify-content: center; border-right: 1px solid #c8c6c4; border-bottom: 6px solid #fff; }
    .tab.on { border-bottom-color: #117865; font-weight: 600; padding-left: 29px; padding-right: 29px; }
    .add { width: 59px; background: #117865; justify-content: center; }
    .status { display: flex; align-items: center; justify-content: space-between; height: 35px; background: #f3f2f1; border-top: 1px solid #dddbd9; border-bottom: 1px solid #000; padding: 0 27px 0 6px; font-size: 17px; color: #3b3a39; }
    .zoom { display: flex; align-items: center; gap: 7px; color: #605e5c; }
    .zoom .sg { font-size: 22px; font-weight: 600; line-height: 30px; }
    .zoom output { margin: 0 12px 0 14px; }
    input[type=range] { appearance: none; width: 150px; height: 18px; margin: 0; background: linear-gradient(#605e5c, #605e5c) center / 100% 2px no-repeat; }
    input[type=range]::-webkit-slider-thumb { appearance: none; width: 6px; height: 17px; background: #605e5c; }
  `];
  render() {
    const back = icon(svg`<path d="M10 0L1 10l9 10M18 0L9 10l9 10" stroke="#252423" stroke-width="1.500"/>`, 20, 20);
    const grey = (b: unknown) => icon(svg`<g stroke="#7a7876">${b}</g>`, 30, 30);
    return html`
      <title-bar></title-bar>
      <ribbon-bar></ribbon-bar>
      <div class="main">
        <aside class="rail">
          <button class="on" aria-label="Report view">${grey(svg`<g stroke="#111"><path d="M4 3v22h20"/><path d="M8 10h3v12H8zM14 14h3v8h-3zM20 5h3v17h-3z"/></g>`)}</button>
          <button aria-label="Table view">${grey(svg`<path d="M2 4h23v22H2zM2 7h23M2 13.500h23M2 20h23M10 7v19M17.500 7v19"/>`)}</button>
          <button aria-label="Model view">${grey(svg`<path d="M1 9h10v11H1zM1 13h10M16 2h11v11H16zM16 6h11M16 16h11v12H16zM16 20h11M6 9V5h10M6 20v4h10"/>`)}</button>
          <button aria-label="DAX query view">${grey(svg`<path d="M6 15V4c0-1 1-2 2-2h7l6 6v8M15 2v6h6M24 10v9c0 4-1 6-5 7" stroke-width="1.500"/><text x="-1" y="26" font-family="Open Sans" font-weight="700" font-size="10" fill="#7a7876" stroke="none">DAX</text>`)}</button>
        </aside>
        <div class="work">
          <div class="stage">
            <report-page></report-page>
            <aside class="pane filters"><button aria-label="Expand filters">${back}</button><h2>${icon(svg`<path d="M17 1v17l-6-6H2V7h9z"/>`, 18, 19)}Filters</h2></aside>
          </div>
          <div class="tabs">
            <div class="views">
              <button class="desk" aria-label="Desktop layout">${icon(svg`<path d="M1 1h27v15H1zM14 16v4M9 20.500h11" stroke="#605e5c" stroke-width="2"/>`, 29, 22)}</button>
              <button class="phone" aria-label="Mobile layout">${icon(svg`<rect x="1" y="1" width="16" height="28" rx="2" stroke="#605e5c" stroke-width="2"/><path d="M8 25h3" stroke="#605e5c" stroke-width="2"/>`, 18, 30)}</button>
              <button class="step" aria-label="Previous page">${icon(svg`<path d="M7 0v12L0 6z" fill="#c8c6c4" stroke="none"/>`, 7, 12)}</button>
              <button class="next" aria-label="Next page">${icon(svg`<path d="M0 0v12l7-6z" fill="#c8c6c4" stroke="none"/>`, 7, 12)}</button>
            </div>
            <button class="tab">Dashboard</button>
            <button class="tab on">Details</button>
            <button class="add" aria-label="New page">${icon(svg`<path d="M9 1v16M1 9h16" stroke="#fff" stroke-width="4"/>`, 18, 18)}</button>
          </div>
        </div>
        <aside class="pane"><button aria-label="Expand visualizations">${back}</button><h2>Visualizations</h2><div class="tip" role="tooltip">Expand</div></aside>
        <aside class="pane"><button aria-label="Expand data">${back}</button><h2>Data</h2></aside>
      </div>
      <div class="status">
        <span>Page 2 of 2</span>
        <div class="zoom"><span class="sg">-</span><input type="range" min="0" max="100" value="50" aria-label="Zoom" /><span class="sg">+</span><output>100%</output>
          <button aria-label="Fit to page">${icon(svg`<path d="M1 1h22v17H1z" stroke="#605e5c"/><path d="M9 4H5v4M15 4h4v4M9 15H5v-4M15 15h4v-4" stroke="#605e5c" stroke-width="1.500"/>`, 24, 19)}</button></div>
      </div>
      <task-bar></task-bar>`;
  }
}
